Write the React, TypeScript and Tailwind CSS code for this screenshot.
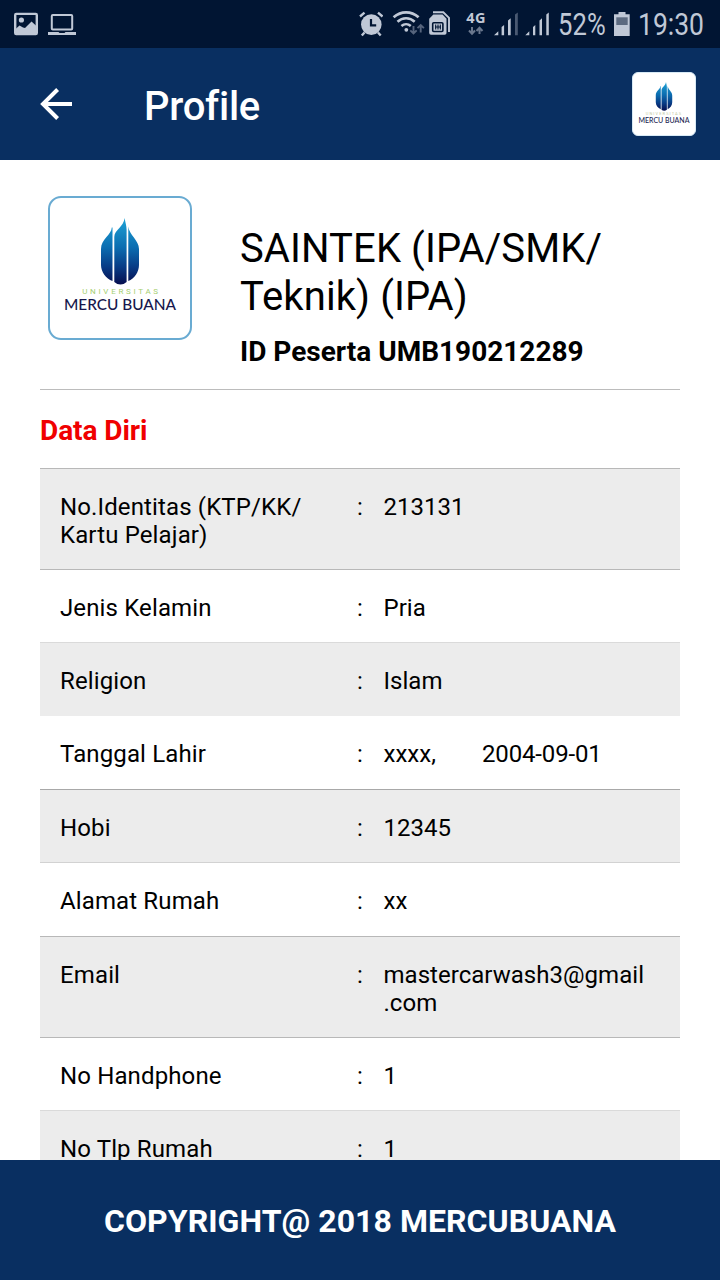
import type { ReactNode } from "react";

type Field = { label: string; value: ReactNode; height: string; border: string };

const fields: Field[] = [
  { label: "No.Identitas (KTP/KK/\nKartu Pelajar)", value: "213131", height: "h-[101px] pt-6", border: "border-[#b8b8b8]" },
  { label: "Jenis Kelamin", value: "Pria", height: "h-[73px] pt-6", border: "border-[#b8b8b8]" },
  { label: "Religion", value: "Islam", height: "h-[74px] pt-6", border: "border-[#dadada]" },
  {
    label: "Tanggal Lahir",
    value: (
      <span className="flex">
        <span className="w-[98.5px]">xxxx,</span>
        <span className="tracking-[-0.15px]">2004-09-01</span>
      </span>
    ),
    height: "h-[73px] pt-[23px]",
    border: "border-white",
  },
  { label: "Hobi", value: "12345", height: "h-[73px] pt-6", border: "border-[#a8a8a8]" },
  { label: "Alamat Rumah", value: "xx", height: "h-[74px] pt-6", border: "border-[#d2d2d2]" },
  { label: "Email", value: "mastercarwash3@gmail\n.com", height: "h-[101px] pt-6", border: "border-[#b8b8b8]" },
  { label: "No Handphone", value: "1", height: "h-[73px] pt-6", border: "border-[#b8b8b8]" },
  { label: "No Tlp Rumah", value: "1", height: "h-[73px] pt-6", border: "border-[#dadada]" },
];

function StatusBar() {
  return (
    <div className="flex h-12 shrink-0 items-center bg-[#011533] pl-[14px] text-[#c0c8d6]">
      <svg className="h-12 w-6" viewBox="14 0 24 48" fill="none">
        <rect x="15.2" y="13.9" width="21.6" height="20.2" rx="1" stroke="currentColor" strokeWidth="2.4" />
        <circle cx="21.4" cy="20" r="2.6" fill="currentColor" />
        <path d="M15 29.5l4.5-4 3.5 2 2 .5 6.5-6.5 5.5 5V34H15z" fill="currentColor" />
      </svg>
      <svg className="ml-[10px] h-12 w-7" viewBox="48 0 28 48" fill="none">
        <rect x="51.8" y="14.9" width="20.4" height="14.6" rx="1" stroke="currentColor" strokeWidth="2" />
        <path d="M48 32h10.5l1 1h5l1-1H76v3H48z" fill="currentColor" />
      </svg>

      <svg className="ml-auto h-12 w-6" viewBox="359 0 24 48" fill="none">
        <circle cx="371.3" cy="24.6" r="10.3" fill="currentColor" />
        <path d="M360 16.5l4.5-3.8M378 12.7l4.5 3.8M364.5 32.5l-2.7 3M378 32.5l2.7 3" stroke="currentColor" strokeWidth="2.4" />
        <path d="M371 19v6.3h5.2" stroke="#011533" strokeWidth="2.2" />
      </svg>
      <svg className="ml-[9px] h-12 w-[34px]" viewBox="392 0 34 48" fill="none">
        <path d="M393.6 17.3c7.5-6.5 17.5-6.5 25 0" stroke="currentColor" strokeWidth="2.8" />
        <path d="M397.5 21.8c5-4.7 12.2-4.7 17.2 0" stroke="currentColor" strokeWidth="2.6" />
        <path d="M401.4 26c2.8-2.5 6.6-2.5 9.4 0" stroke="currentColor" strokeWidth="2.5" />
        <circle cx="406.3" cy="29.8" r="1.9" fill="currentColor" />
        <path d="M413.5 26v7.5M410.3 30.3l3.2 3.2 3.2-3.2M420.7 32.5V25M417.5 28.2l3.2-3.2 3.2 3.2" stroke="#56647c" strokeWidth="1.9" />
      </svg>
      <svg className="ml-[2px] h-12 w-6" viewBox="428 0 24 48" fill="none">
        <path d="M433.3 14.5h9.2l4 4.2V33q0 1.8-1.8 1.8H431q-1.8 0-1.8-1.8V18.8z" fill="currentColor" />
        <path d="M433 12.2h10.3l5.7 5.6V32" stroke="currentColor" strokeWidth="1.9" />
        <rect x="432.7" y="22.7" width="10.2" height="8.8" rx="1" stroke="#011533" strokeWidth="1.6" />
        <path d="M435.7 24.5v5M438 24.5v5M440.3 24.5v5M435 27h6" stroke="#011533" strokeWidth="1.1" />
      </svg>
      <div className="ml-[13px] flex h-12 w-[22px] flex-col items-center pt-[10px]">
        <span className="font-['Open_Sans',sans-serif] text-[14.5px] leading-4 font-bold tracking-[0.3px]">4G</span>
        <svg className="h-[10px] w-4" viewBox="0 0 16 10" fill="none">
          <path d="M4 1v6.500M1 4.500l3 3.200 3-3.200M11.500 8V1.500M8.500 5l3-3.200 3 3.200" stroke="#6a778d" strokeWidth="2" />
        </svg>
      </div>
      <svg className="ml-[6px] h-12 w-[26px]" viewBox="493 0 26 48" fill="none">
        <path d="M494 35.3l4.3-4v4zM501.6 27l2.5-2v10.3h-2.5zM508 20.5l2.7-2.3v17.1H508z" fill="currentColor" />
        <path d="M515 14.5l2.8-2v22.8H515z" fill="#4a5972" />
      </svg>
      <svg className="ml-[6px] h-12 w-[25px]" viewBox="525 0 25 48" fill="none">
        <path d="M525.3 35.3l4-4v4zM533 27l2.3-2v10.3H533zM539.5 20.5l2.5-2.3v17.1h-2.5zM546.3 14.5l2.5-2v22.8h-2.5z" fill="currentColor" />
      </svg>
      <div className="ml-[8px] w-[48px] pt-[2px]">
        <span className="block w-max origin-left scale-x-[0.825] text-[31px] leading-[48px] tracking-[0.2px]">52%</span>
      </div>
      <svg className="ml-[7px] h-12 w-[18px]" viewBox="613 0 18 48" fill="none">
        <path d="M618.5 12h7v2.2h4.2V36H614V14.2h4.5z" fill="currentColor" />
        <path d="M616.3 17.3h11.4V25h-11.4z" fill="#5c6a80" />
      </svg>
      <div className="ml-[7px] w-[82px] pt-[2px]">
        <span className="block w-max origin-left scale-x-[0.855] text-[31px] leading-[48px]">19:30</span>
      </div>
    </div>
  );
}

function Flame({ className, id }: { className: string; id: string }) {
  return (
    <svg className={className} viewBox="0 0 40 67" fill="none">
      <defs>
        <linearGradient id={id} x1="0" y1="0" x2="0" y2="66" gradientUnits="userSpaceOnUse">
          <stop offset="0" stopColor="#1da3d6" />
          <stop offset="0.45" stopColor="#0b6cb0" />
          <stop offset="0.75" stopColor="#083a84" />
          <stop offset="1" stopColor="#060f50" />
        </linearGradient>
      </defs>
      <g fill={`url(#${id})`}>
        <path d="M11.8 9.5C11.5 17 1 21 1 31v16c0 7 5 13.5 11.5 16V9.5z" />
        <path d="M14.3 64V19C14.3 12 23.8 9 24.6 0c.5 3.5 2 7.5 2 12v52c-2 1.7-3.8 2.5-6.1 2.5s-4.2-.8-6.2-2.5z" />
        <path d="M28.3 8.5C29 17 39 22 39 31v16c0 7-4.5 13.5-10.7 16z" />
      </g>
    </svg>
  );
}

export default function App() {
  return (
    <div className="flex h-[1280px] w-[720px] flex-col overflow-hidden bg-white font-[Roboto,sans-serif] text-black">
      <StatusBar />

      <header className="flex h-28 shrink-0 items-center bg-[#092f61] pr-6 pl-10 text-white">
        <svg className="h-8 w-8" viewBox="0 0 32 32" fill="none" stroke="currentColor" strokeWidth="4">
          <path d="M32 16H3M17.6 1.5L3 16l14.6 14.5" />
        </svg>
        <h1 className="mt-[6px] ml-[72px] text-[40px] leading-[48px] font-medium tracking-[-0.25px]">Profile</h1>
        <div className="ml-auto flex h-16 w-16 flex-col items-center rounded-[6px] border border-[#d8eaf5] bg-white pt-[9px]">
          <Flame id="flame-small" className="h-[29px] w-[18px]" />
          <span className="mt-px text-[4px] leading-[4px] tracking-[1.1px] text-[#bfc8a0]">UNIVERSITAS</span>
          <span className="font-['Lato',sans-serif] text-[7px] leading-[9px] font-medium text-[#191d50]">MERCU BUANA</span>
        </div>
      </header>

      <main className="flex min-h-0 flex-1 flex-col overflow-hidden px-10">
        <section className="flex h-[230px] shrink-0 border-b border-[#bcbcbc] pt-9 pl-2">
          <div className="flex h-36 w-36 shrink-0 flex-col items-center rounded-[13px] border-2 border-[#69abd2] pt-5">
            <Flame id="flame-large" className="h-[67px] w-10" />
            <span className="mt-[3px] pl-[3px] text-[8px] leading-[8px] tracking-[2.7px] text-[#a6cf73]">UNIVERSITAS</span>
            <span className="font-['Lato',sans-serif] text-[15.4px] leading-[16px] font-medium text-[#17174d]">MERCU BUANA</span>
          </div>
          <div className="ml-12 pt-[29px]">
            <h2 className="text-[40px] leading-[48px] tracking-[0.1px] whitespace-pre">{"SAINTEK (IPA/SMK/\nTeknik) (IPA)"}</h2>
            <p className="mt-[14px] text-[28px] leading-[33px] font-bold whitespace-nowrap">ID Peserta UMB190212289</p>
          </div>
        </section>

        <h3 className="h-[78px] shrink-0 pt-6 text-[28px] leading-[33px] font-bold tracking-[-0.05px] text-[#f00000]">Data Diri</h3>

        <div className="flex flex-col">
          {fields.map((field) => (
            <div
              key={field.label}
              className={`flex shrink-0 border-t pl-5 text-[24px] leading-[28px] whitespace-pre odd:bg-[#ececec] ${field.height} ${field.border}`}
            >
              <div className="w-[297px] tracking-[0.13px]">{field.label}</div>
              <div className="w-[26.5px]">:</div>
              <div className="tracking-[0.03px]">{field.value}</div>
            </div>
          ))}
        </div>
      </main>

      <footer className="flex h-[120px] shrink-0 items-center justify-center bg-[#092f61] text-[32px] leading-[38px] font-bold tracking-[0.05px] text-white">
        <span className="mt-[2px]">COPYRIGHT@ 2018 MERCUBUANA</span>
      </footer>
    </div>
  );
}
